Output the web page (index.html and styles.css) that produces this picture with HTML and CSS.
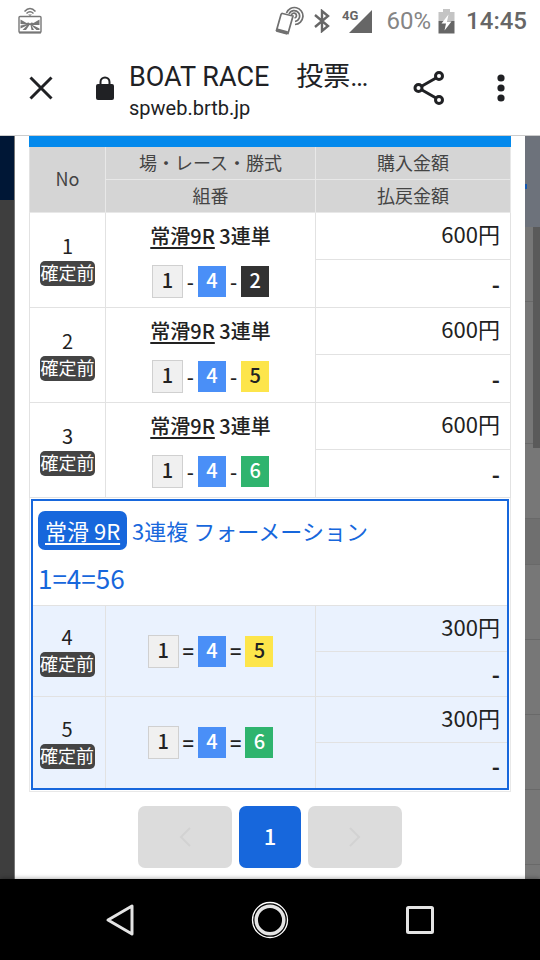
FILE: index.html
```
<!DOCTYPE html>
<html lang="ja">
<head>
<meta charset="utf-8">
<meta name="viewport" content="width=device-width, initial-scale=1.0">
<title>BOAT RACE　投票</title>
<link rel="stylesheet" href="styles.css">
</head>
<body>
	<div class="status">
		<svg class="cast" width="24" height="28" viewBox="0 0 24 28" fill="none" stroke="#777">
			<path d="M6.500 4.500Q12-1.500 17.500 4.500M8.500 6.500Q12 3 15.500 6.500" stroke-width="1.500"/>
			<path d="M10 7.500h4L12 9z" fill="#777" stroke="none"/>
			<rect x="1" y="9.500" width="22" height="16" rx="1" stroke-width="1.400"/>
			<path d="M2.500 12.500l6 3.500 2-.5 1.500 1 1.500-1 2 .5 6-3.500V18l-7 0 7 3.500V23h-3l-5-4.500L16 23h-2.500L12.500 18h-1L8 23H4.500l4.500-4.500-6.500 3V18.500l6-1-6-.5z" fill="#777" stroke="none"/>
			<path d="M1 25.500h22" stroke-width="2"/>
		</svg>
		<div class="status-right">
			<svg width="29" height="30" viewBox="0 0 29 30" fill="none" stroke="#707070">
				<path d="M7.500 7.500L18 10L13 27.500L1.500 24.500L6 8.500Q6.500 7.300 7.500 7.500Z" stroke-width="1.700"/>
				<path d="M1.500 24l11 3" stroke-width="3.500"/>
				<path d="M11.500 7A8.500 8.500 0 1 1 20 18.500M14 8A5.500 5.500 0 1 1 20 15.500" stroke-width="1.700"/>
				<path d="M16.500 9A2.500 2.500 0 1 1 19.500 12" stroke-width="1.700"/>
			</svg>
			<svg class="bluetooth" width="16" height="24" viewBox="0 0 16 24" fill="none" stroke="#666" stroke-width="2.400">
				<path d="M1 6l13 11-6 5V2l6 5L1 18"/>
			</svg>
			<svg class="signal" width="31" height="26" viewBox="0 0 31 26">
				<path d="M30 2v23H7z" fill="#666"/>
				<text class="signal-text" x="0" y="12">4G</text>
			</svg>
			<span class="percent">60%</span>
			<svg class="battery" width="17" height="25" viewBox="0 0 17 25">
				<path d="M5 0h7v3h4.500v9H.5V3H5z" fill="#c4c4c4"/>
				<path d="M.5 12h16v12.500H.5z" fill="#666"/>
				<path d="M10.500 5.500L3.500 14.500h4.500l-1.500 7 7-9H9z" fill="#fff"/>
			</svg>
			<span class="clock">14:45</span>
		</div>
	</div>
	<header class="toolbar">
		<button class="icon-btn close" type="button" aria-label="閉じる">
			<svg width="24" height="24" viewBox="0 0 24 24" stroke="#202124" stroke-width="3"><path d="M1.500 1.500l21 21M22.500 1.500l-21 21"/></svg>
		</button>
		<svg class="lock" width="18" height="24" viewBox="0 0 18 24">
			<rect y="8" width="18" height="16" rx="2" fill="#202124"/>
			<path d="M4.500 9V6a4.500 4.500 0 0 1 9 0v3" fill="none" stroke="#202124" stroke-width="2"/>
		</svg>
		<div class="page">
			<div class="page-title">BOAT RACE　投票…</div>
			<div class="page-url">spweb.brtb.jp</div>
		</div>
		<button class="icon-btn share" type="button" aria-label="共有">
			<svg width="32" height="34" viewBox="0 0 32 34" fill="none" stroke="#202124" stroke-width="3">
				<path d="M9 15l14-8M9 19l14 8"/>
				<circle cx="5.500" cy="17" r="3.500"/><circle cx="26" cy="5" r="3.500"/><circle cx="26" cy="29" r="3.500"/>
			</svg>
		</button>
		<button class="icon-btn more" type="button" aria-label="メニュー">
			<svg width="8" height="28" viewBox="0 0 8 28" fill="#202124"><circle cx="4" cy="4" r="3.600"/><circle cx="4" cy="14" r="3.600"/><circle cx="4" cy="24" r="3.600"/></svg>
		</button>
	</header>

	<main class="view">
		<div class="side side-left"></div>
		<section class="sheet">
			<table class="bets">
				<colgroup><col class="col-no"><col><col class="col-money"></colgroup>
				<thead>
					<tr><th rowspan="2">No</th><th>場・レース・勝式</th><th>購入金額</th></tr>
					<tr><th>組番</th><th>払戻金額</th></tr>
				</thead>
				<tbody>
					<tr>
						<td class="no" rowspan="2">1<span class="badge">確定前</span></td>
						<td class="race" rowspan="2">
							<p class="race-name"><a href="#">常滑9R</a> 3連単</p>
							<div class="combo"><b class="n1">1</b>-<b class="n4">4</b>-<b class="n2">2</b></div>
						</td>
						<td class="money">600円</td>
					</tr>
					<tr><td class="money payout">-</td></tr>
					<tr>
						<td class="no" rowspan="2">2<span class="badge">確定前</span></td>
						<td class="race" rowspan="2">
							<p class="race-name"><a href="#">常滑9R</a> 3連単</p>
							<div class="combo"><b class="n1">1</b>-<b class="n4">4</b>-<b class="n5">5</b></div>
						</td>
						<td class="money">600円</td>
					</tr>
					<tr><td class="money payout">-</td></tr>
					<tr>
						<td class="no" rowspan="2">3<span class="badge">確定前</span></td>
						<td class="race" rowspan="2">
							<p class="race-name"><a href="#">常滑9R</a> 3連単</p>
							<div class="combo"><b class="n1">1</b>-<b class="n4">4</b>-<b class="n6">6</b></div>
						</td>
						<td class="money">600円</td>
					</tr>
					<tr><td class="money payout">-</td></tr>
				</tbody>
			</table>
			<div class="group-wrap">
				<div class="group">
					<div class="group-head">
						<p class="group-name"><a href="#">常滑 9R</a>3連複 フォーメーション</p>
						<p class="group-nums">1=4=56</p>
					</div>
					<table class="bets group-bets">
						<colgroup><col class="col-no"><col><col class="col-money"></colgroup>
						<tbody>
							<tr>
								<td class="no" rowspan="2">4<span class="badge">確定前</span></td>
								<td class="race" rowspan="2">
									<div class="combo"><b class="n1">1</b>=<b class="n4">4</b>=<b class="n5">5</b></div>
								</td>
								<td class="money">300円</td>
							</tr>
							<tr><td class="money payout">-</td></tr>
							<tr>
								<td class="no" rowspan="2">5<span class="badge">確定前</span></td>
								<td class="race" rowspan="2">
									<div class="combo"><b class="n1">1</b>=<b class="n4">4</b>=<b class="n6">6</b></div>
								</td>
								<td class="money">300円</td>
							</tr>
							<tr><td class="money payout">-</td></tr>
						</tbody>
					</table>
				</div>
			</div>
			<nav class="pager">
				<button class="pager-btn" type="button" aria-label="前へ" disabled>
					<svg width="12" height="20" viewBox="0 0 12 20" fill="none" stroke="#d2d2d2" stroke-width="2"><path d="M11 1L2 10l9 9"/></svg>
				</button>
				<button class="pager-btn current" type="button">1</button>
				<button class="pager-btn" type="button" aria-label="次へ" disabled>
					<svg width="12" height="20" viewBox="0 0 12 20" fill="none" stroke="#d2d2d2" stroke-width="2"><path d="M1 1l9 9-9 9"/></svg>
				</button>
			</nav>
		</section>
		<div class="side side-right">
			<div class="strip strip-head"></div>
			<div class="strip"></div>
			<div class="strip strip-tall"></div>
			<div class="strip"></div>
			<div class="strip strip-dark"></div>
			<div class="strip"></div>
			<div class="strip"></div>
			<div class="strip"></div>
			<div class="strip"></div>
			<div class="strip strip-last"></div>
			<div class="scrollbar"></div>
			<div class="dot"></div>
		</div>
	</main>

	<nav class="android">
		<button type="button" aria-label="戻る">
			<svg width="40" height="40" viewBox="0 0 40 40" fill="none" stroke="#e4e4e4" stroke-width="3" stroke-linejoin="round"><path d="M32 6v28L8 20z"/></svg>
		</button>
		<button type="button" aria-label="ホーム">
			<svg width="40" height="40" viewBox="0 0 40 40" fill="none"><circle cx="20" cy="20" r="17.500" stroke="#fff" stroke-width="1.300"/><circle cx="20" cy="20" r="13.800" stroke="#e4e4e4" stroke-width="3.500"/></svg>
		</button>
		<button type="button" aria-label="履歴">
			<svg width="40" height="40" viewBox="0 0 40 40" fill="none" stroke="#e4e4e4" stroke-width="3"><rect x="7.500" y="7.500" width="25" height="25" rx="1"/></svg>
		</button>
	</nav>
</body>
</html>
```
FILE: styles.css
```
* { box-sizing: border-box; margin: 0; padding: 0; }
body { display: flex; flex-direction: column; min-height: 100vh; background: #fff; color: #222; font-family: "Noto Sans CJK JP", sans-serif; }
button { border: none; background: none; font: inherit; }
svg { display: block; flex: none; }

/* status bar */
.status { display: flex; justify-content: space-between; align-items: center; height: 42px; padding: 0 13px 0 18px; color: #666; font: 500 24px/28px Roboto, sans-serif; }
.status-right { display: flex; align-items: center; }
.bluetooth { margin-left: 10px; }
.signal { margin-left: 12px; }
.signal-text { fill: #666; font: 700 13px Roboto, sans-serif; }
.percent { margin-left: 14px; color: #858585; font-weight: 400; }
.battery { margin-left: 7px; }
.clock { margin-left: 11px; }

/* browser toolbar */
.toolbar { display: flex; align-items: center; height: 94px; padding: 0 15px 2px; border-bottom: 1px solid #ccc; color: #202124; }
.icon-btn { display: flex; align-items: center; justify-content: center; flex: none; height: 48px; }
.close { width: 51px; }
.lock { margin: 0 15px 0 30px; }
.page { flex: 1; min-width: 0; padding-top: 4px; font-family: Roboto, "Noto Sans CJK JP", sans-serif; }
.page-title { overflow: hidden; white-space: nowrap; font-size: 27px; line-height: 36px; }
.page-url { font-size: 20px; line-height: 26px; }
.share { width: 48px; }
.more { width: 48px; margin-left: 24px; }

/* page behind + sheet */
.view { display: flex; flex: 1; }
.side { flex: none; width: 15px; }
.side-left { background: linear-gradient(#001736 64px, #3e3e3e 64px); border-right: 1px solid #777; }
.side-right { position: relative; display: flex; flex-direction: column; background: #777; }
.strip { height: 75px; border-bottom: 1px solid #696969; }
.strip-head { height: 91px; border: none; background: #6d727b; }
.strip-tall { height: 142px; }
.strip-dark { height: 46px; background: #6f6f6f; }
.strip-last { flex: 1; border: none; }
.scrollbar { position: absolute; top: 91px; right: 0; width: 7px; height: 221px; background: #5a5a5a; }
.dot { position: absolute; top: 48px; left: 0; width: 2px; height: 5px; background: #1458b0; }
.sheet { flex: 1; min-width: 0; padding: 0 14px 11px; background: #fff; }

/* bet list */
.bets { width: 100%; border-top: 11px solid #0389ec; border-collapse: separate; border-spacing: 0; table-layout: fixed; }
.col-no { width: 77px; }
.col-money { width: 195px; }
.bets th, .bets td { border-right: 1px solid #e2e2e2; border-bottom: 1px solid #e2e2e2; }
.bets th { height: 33px; padding-bottom: 3px; background: #d5d5d5; border-color: #e8e8e8; color: #444; font-size: 18px; font-weight: 400; line-height: 24px; }
.bets td { height: 47px; }
.bets td.payout { height: 48px; }
.bets th:first-child, .bets .no { border-left: 1px solid #e2e2e2; }
.bets tr:nth-child(2) th:first-child { border-left: none; }
.no { font-size: 20px; line-height: 24px; text-align: center; }
.badge { display: block; width: 55px; height: 25px; margin: 3px auto 0; border-radius: 5px; background: #444; color: #fff; font-size: 18px; line-height: 23px; white-space: nowrap; }
.race { text-align: center; }
.race-name { font-size: 20px; font-weight: 500; line-height: 28px; }
.race-name a { color: inherit; text-underline-offset: 3px; }
.combo { display: flex; align-items: center; justify-content: center; gap: 4px; font-size: 20px; font-weight: 500; line-height: 30px; }
.race-name + .combo { margin-top: 15px; }
.combo b { width: 28px; height: 31px; color: #fff; font-weight: 500; line-height: 28px; }
.combo .n1 { width: 31px; height: 33px; border: 1px solid #d0d0d0; background: #f0f0f0; color: #222; }
.combo .n2 { background: #323232; }
.combo .n4 { background: #4a8ff7; }
.combo .n5 { background: #fde54b; color: #222; }
.combo .n6 { background: #2fb46e; }
.money { padding: 0 10px 6px 0; font-size: 22px; line-height: 30px; text-align: right; }
.payout { padding-bottom: 2px; font-weight: 700; }

/* formation group */
.group-wrap { padding: 1px; border: 1px solid #e8e8e8; border-top: none; }
.group { border: 2px solid #1767dc; }
.group-head { padding: 10px 5px 9px; border-bottom: 1px solid #e2e2e2; color: #1767dc; }
.group-name { display: flex; align-items: center; gap: 5px; font-size: 22px; line-height: 39px; }
.group-name a { padding: 0 7px; border-radius: 7px; background: #1767dc; color: #fff; text-underline-offset: 3px; }
.group-nums { margin-top: 10px; font-size: 26px; line-height: 36px; }
.group-bets { border-top: none; background: #eaf2fe; }
.group-bets .col-no { width: 73px; }
.group-bets .col-money { width: 191px; }
.group-bets td { height: 46px; }
.group-bets td.payout { height: 45px; }
.group-bets .no { padding-right: 4px; border-left: none; }
.group-bets td.money { padding-right: 7px; border-right: none; }
.group-bets tr:nth-last-child(2) .no, .group-bets tr:nth-last-child(2) .race, .group-bets tr:last-child td { border-bottom: none; }

/* pager */
.pager { display: flex; justify-content: center; gap: 7px; margin-top: 14px; }
.pager-btn { display: flex; align-items: center; justify-content: center; width: 94px; height: 62px; border-radius: 7px; background: #dcdcdc; }
.current { width: 62px; padding-bottom: 5px; background: #1767dc; color: #fff; font-size: 22px; font-weight: 500; line-height: 30px; }

/* android nav bar */
.android { position: relative; display: flex; justify-content: center; align-items: center; gap: 110px; height: 81px; background: #000; box-shadow: 0 -1px 4px rgba(0,0,0,0.3); }
.android button { width: 40px; height: 40px; }
```
